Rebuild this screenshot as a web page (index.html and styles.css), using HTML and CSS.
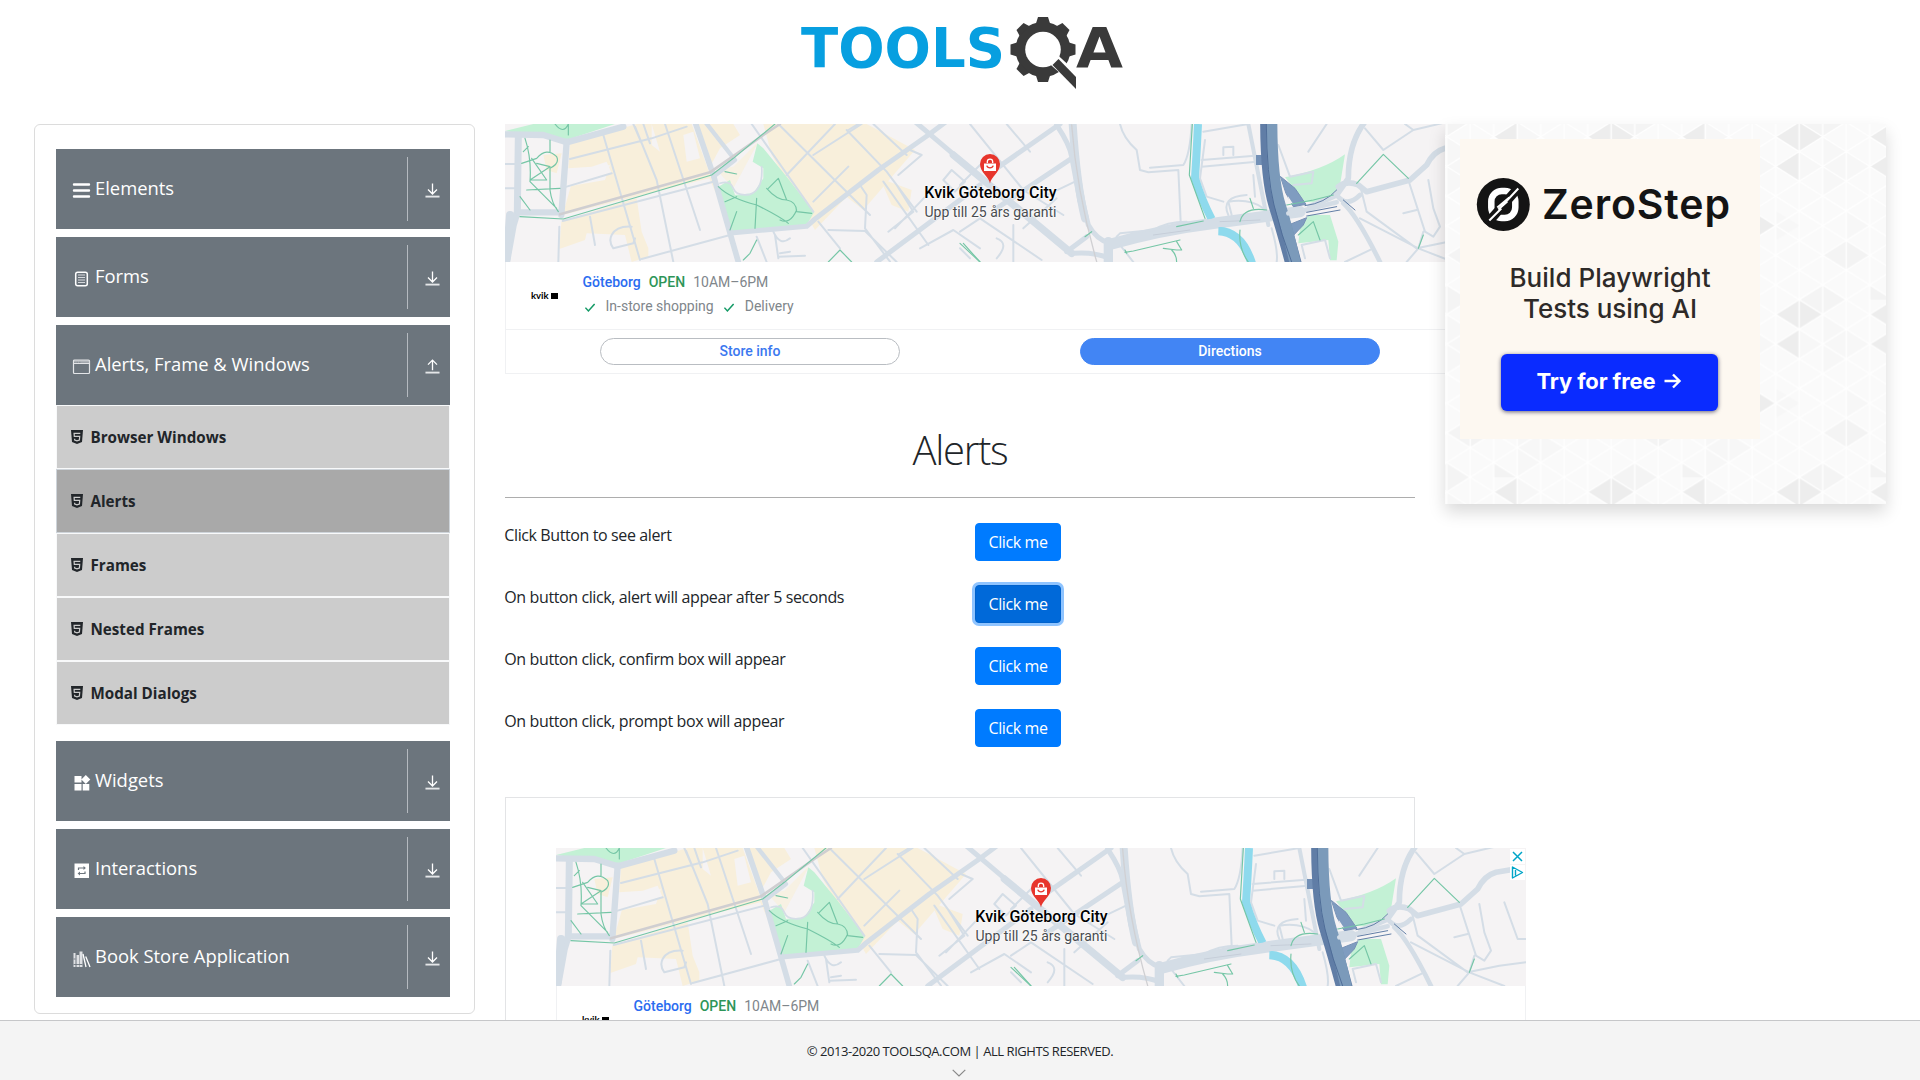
FILE: index.html
```html
<!DOCTYPE html>
<html lang="en">
<head>
<meta charset="utf-8">
<title>ToolsQA - Alerts</title>
<link rel="stylesheet" href="styles.css">
</head>
<body>
<svg class="defs" width="0" height="0" aria-hidden="true">
  <symbol id="i-down" viewBox="0 0 16 17"><path d="M8 1v11M3.2 7.4 8 12.2l4.8-4.8" fill="none" stroke="#fff" stroke-width="1.4"/><path d="M.5 15h15" stroke="#e4e6e8" stroke-width="2"/></symbol>
  <symbol id="i-up" viewBox="0 0 16 17"><path d="M8 12.5V1.6M3.2 6.5 8 1.7l4.8 4.8" fill="none" stroke="#fff" stroke-width="1.4"/><path d="M.5 15h15" stroke="#e4e6e8" stroke-width="2"/></symbol>
  <symbol id="i-html" viewBox="0 0 12 14"><path d="M0 0h12l-1 12-5 2-5-2z" fill="#22262a"/><path d="M9.3 3.3H3.1l.2 3.1h5.4l-.3 3.6-2.4.8-2.3-.8-.1-1.3" fill="none" stroke="#ccc" stroke-width="1.2"/></symbol>
  <symbol id="map" viewBox="0 0 970 138">
    <rect width="970" height="138" fill="#f5f3f4"/>
    <g transform="translate(-5 -9) scale(.33333)" fill="none" stroke-linecap="round" stroke-linejoin="round">
      <g fill="#f8efdb">
        <path d="M210 85 410 27H575L625 165 650 240 628 190 345 260 188 300 215 205 335 175 320 140 275 155 205 160z"/>
        <path d="M590 27H700L720 60 660 100 625 165 590 27zM790 27H1100L1245 105 1090 285 1040 245 945 345 850 180 815 120z"/>
        <path d="M184 320 340 270 410 250 425 350 445 400 445 425 395 441 375 360 260 355 255 375 178 402zM1140 190 1235 225 1225 290 1175 270zM130 120 185 115 170 175 140 165z"/>
        <path d="M650 165 700 155 770 85 785 140 770 90 700 220z" opacity=".7"/>
      </g>
      <g fill="#c3f1d5"><path d="M15 48 100 27H345L200 75z"/><path d="M772 85 790 100 860 185 942 292 920 330 690 350 655 215 690 195 705 240 760 235 790 190 790 160 758 140z"/></g>
      <path d="M455 27 480 110 455 90zM205 170 330 150 315 195 200 215zM580 50 600 130 560 140 550 60z" fill="#f5f3f4" stroke="none"/>
      <g stroke="#d4dde6">
        <path d="M15 58 130 60 200 82 370 35" stroke-width="19"/><path d="M55 65 52 290 40 330 20 441" stroke-width="21"/><path d="M30 300 20 430" stroke-width="24"/>
        <path d="M200 80 184 300M55 292H184" stroke-width="19"/>
        <path d="M585 20 640 180 715 441" stroke-width="17"/><path d="M615 20 705 135 640 185" stroke-width="13"/>
        <path d="M692 354 920 334 945 312 1135 165 1285 60 1345 15M1245 20 1440 185M1130 441 1440 210" stroke-width="15"/>
        <path d="M15 147H45M15 220H45M210 132 455 70 560 35M200 215 335 175M188 318 640 200M310 60 420 435M405 35 470 195 520 441M495 27 600 345M178 335 175 441M425 432 690 360M270 305 285 390M400 27 425 85M430 27 450 85" stroke-width="6"/>
        <path d="M835 27 1110 300M755 27 940 290M860 180 1005 27M940 260 1045 155M940 120 1085 27M955 320 1020 400M985 345 1095 348 1190 441M1150 200 1285 390M1195 180 1265 120 1230 105M1040 45 1160 170 1250 290M1045 45 1075 27M1120 27 1220 120M1080 210 1100 240 1095 340 1170 440M1165 350 1240 290 1190 210M1185 340 1290 230M1260 400 1360 345 1440 400" stroke-width="6"/>
        <path d="M335 360Q350 332 395 335M335 360Q325 380 340 400L400 385 405 370M770 365 800 441M825 360 835 430M820 350Q840 395 870 370M840 415 870 410M835 425 915 422M1330 195 1355 165 1395 200 1365 230z" stroke-width="6"/>
      </g>
      <path d="M660 205Q690 195 700 220Q710 245 750 238Q790 225 785 155" stroke="#d4dde6" stroke-width="5"/>
      <path d="M180 298 630 172 790 60 840 27" stroke="#cfced1" stroke-width="8"/>
      <g stroke="#75c6a6" stroke-width="3.5">
        <path d="M60 305 190 312 635 180 700 130 825 27"/>
        <path d="M75 70Q95 130 90 200L170 280M85 95 70 110M150 75V110M65 145 110 130Q140 95 170 125Q180 145 150 160V225Q155 265 175 290M95 130 140 195 90 195 150 155 110 145M80 225 180 220M60 245 90 285M165 27Q190 60 205 27V60"/>
        <path d="M655 215Q690 250 770 270Q840 305 865 325M770 250 765 340M800 220Q830 255 860 255Q890 260 890 290L935 295M805 220 835 190 860 255M890 285Q870 330 840 315M675 260 710 245M710 290 690 345M770 375 750 415 730 435M985 441 1020 405 1055 441M1390 385 1440 441M675 170 710 177"/>
      </g>
    </g>
    <g transform="translate(455 -9) scale(.33333)" fill="none" stroke-linecap="round" stroke-linejoin="round">
      <g fill="#c3f1d5"><path d="M975 187Q1090 165 1155 118L1140 210Q1100 270 1035 260z"/><path d="M1045 300H1110L1135 380 1130 436H1110L1105 375 1015 385 1020 340z"/></g>
      <g stroke="#d4dde6">
        <path d="M-20 120 335 415" stroke-width="22"/>
        <path d="M110 160 300 27M290 30Q330 90 335 125L360 260M335 130 110 280M340 27Q350 200 385 330Q410 375 450 385M320 410 380 365M340 415Q400 410 450 430" stroke-width="15"/>
        <path d="M338 27Q350 210 375 310" stroke-width="24"/>
        <path d="M445 380V441" stroke-width="28"/><path d="M450 388Q600 345 760 325L1020 290" stroke-width="34"/>
        <path d="M865 27 925 330" stroke-width="12"/>
        <path d="M1215 20Q1165 85 1165 190L1130 240 1050 275M1135 215Q1160 195 1195 210L1220 230 1350 195 1400 150Q1420 110 1455 100L1500 92" stroke-width="17"/>
        <path d="M1150 265Q1190 300 1260 441M1130 240Q1160 280 1200 240" stroke-width="14"/>
        <path d="M480 27Q490 70 530 105L540 165 565 172 655 165 662 320M570 158 670 150Q690 120 695 27M730 50 865 27M725 135 885 122M725 155 890 140M790 120V97L820 95V120M735 75 720 190 740 245 790 260M470 365 480 355 580 345Q620 320 680 320M805 300Q780 245 860 240M815 300 805 260Q870 250 910 280M880 180 885 245M935 340Q955 410 950 441" stroke-width="6"/>
        <path d="M30 27 190 225 310 300M140 27 210 110M0 350 60 310 245 435M160 330V441M110 370Q150 385 110 430M0 210 60 150M30 430 0 400M240 250 345 200M190 340 290 250M480 390 520 441" stroke-width="6"/>
        <path d="M955 90 990 185 1060 170 1055 205 1000 210M1100 27 1045 110M1215 40 1270 105 1360 45 1465 20M1335 27 1360 45M1200 210 1220 290 1370 400 1465 380 1545 370M1200 310 1375 400 1480 441M1345 195 1395 350 1420 365 1440 335 1420 280 1405 195M1390 350 1375 400 1340 441M1330 295 1370 285M1480 190 1520 300 1545 300M1035 430 1025 390 1095 375 1110 430M1155 441 1240 400" stroke-width="6"/>
      </g>
      <path d="M335 30Q350 230 410 440" stroke="#d0d0d3" stroke-width="4"/>
      <path d="M714 27Q710 115 705 190Q725 255 755 312" stroke="#8edaed" stroke-width="24" stroke-linecap="butt"/><path d="M775 348Q845 350 875 445" stroke="#8edaed" stroke-width="26" stroke-linecap="butt"/>
      <path d="M640 340 950 300" stroke="#d4dde6" stroke-width="28"/>
      <path d="M580 360 690 345M780 320 900 315" stroke="#c6ced9" stroke-width="3"/>
      <g stroke="#607da6">
        <path d="M888 135H925" stroke="#7390b6" stroke-width="30" stroke-linecap="butt"/>
        <path d="M962 185 1005 220 1038 268 1000 275 978 235zM985 330 1040 308 1030 330 990 372z" fill="#7f9cc0" stroke="#7590b5" stroke-width="3"/>
        <path d="M983 242 1000 268 987 262z" fill="#f5f3f4" stroke="none"/>
        <path d="M925 15Q925 190 950 270T1003 455" stroke-width="49" stroke-linecap="butt"/>
        <path d="M935 15Q935 190 960 270T1008 455" stroke="#7b9aba" stroke-width="34" stroke-linecap="butt"/>
        <path d="M919 27Q920 180 942 270T995 441" stroke="#4f6d99" stroke-width="3"/>
        <path d="M1035 272Q1095 265 1130 225M1040 303 1140 285M1150 255 1185 285" stroke-width="3"/>
      </g>
      <path d="M985 295 1035 285 1130 262" stroke="#d4dde6" stroke-width="14"/><path d="M1040 292 1130 275" stroke="#607da6" stroke-width="3"/>
      <g stroke="#75c6a6" stroke-width="3.5"><path d="M697 27 688 180 735 310M650 335 730 318M840 320Q850 275 920 285M870 250 880 280M840 345Q835 400 865 441M495 412 520 408 660 375M495 405 500 415M610 400 650 405 665 405M650 380 665 405M635 405Q650 420 650 441M0 385 60 441M375 365 395 350M1190 205 1270 118 1345 190M980 270 1060 255 1120 240M1015 360 1060 320 1080 375M1375 400 1390 360"/></g>
    </g>
  </symbol>
  <symbol id="pin" viewBox="0 0 20 30"><path d="M10 29.5C9.3 23 0 18.500 0 10a10 10 0 0 1 20 0c0 8.500-9.300 13-10 19.500z" fill="#e7352c"/><path d="M4 9.500h12V17H4z" fill="#fff"/><path d="M7.300 9V7.800a2.700 2.700 0 0 1 5.400 0V9" stroke="#fff" stroke-width="1.300" fill="none"/><path d="M6.800 11.700a3.300 3 0 0 0 6.400 0" stroke="#e7352c" stroke-width="1.300" fill="none"/></symbol>
  <symbol id="check" viewBox="0 0 10 9"><path d="M.4 4.700 3.400 7.900 9.600 1" fill="none" stroke="#149a66" stroke-width="1.500"/></symbol>
</svg>

<header class="header">
  <svg class="logo" viewBox="0 0 324 76" width="324" height="76">
    <text class="logo-blue" x="1" y="51" textLength="204" lengthAdjust="spacingAndGlyphs">TOOLS</text>
    <g transform="translate(243 33.500)">
      <g fill="#3a3a3a"><circle r="27.500"/>
        <path id="tooth" d="M-7-26-5-32.500H5L7-26z"/>
        <use href="#tooth" transform="rotate(45)"/><use href="#tooth" transform="rotate(90)"/><use href="#tooth" transform="rotate(180)"/><use href="#tooth" transform="rotate(225)"/><use href="#tooth" transform="rotate(270)"/><use href="#tooth" transform="rotate(315)"/>
      </g>
      <circle r="17.800" fill="#fff"/>
      <path d="M5 13 13 4 38 27V42z" fill="#fff"/>
      <path d="M9.500 15.500 15.500 9.500 33 27.500V39.500z" fill="#3a3a3a"/>
    </g>
    <text class="logo-dark" x="276" y="51" textLength="47" lengthAdjust="spacingAndGlyphs">A</text>
  </svg>
</header>

<main class="main">
  <nav class="sidebar">
    <section class="group">
      <div class="group-head"><svg class="g-icon" viewBox="0 0 18 18"><path d="M1.500 2.500h15M1.500 8.500h15M1.500 14.500h15" stroke="#fff" stroke-width="2.400" stroke-linecap="round"/></svg><span class="g-title">Elements</span><span class="toggle"><svg><use href="#i-down"/></svg></span></div>
    </section>
    <section class="group">
      <div class="group-head"><svg class="g-icon" viewBox="0 0 18 18"><rect x="3.200" y="2.200" width="11.600" height="13.600" rx="2" fill="none" stroke="#fff" stroke-width="1.500"/><path d="M5.500 5h7M5.500 7.500h7M5.500 10h7M5.500 12.500h7" stroke="#d5d8dc" stroke-width="1.100"/></svg><span class="g-title">Forms</span><span class="toggle"><svg><use href="#i-down"/></svg></span></div>
    </section>
    <section class="group open">
      <div class="group-head"><svg class="g-icon" viewBox="0 0 18 18"><rect x="1" y="2" width="16" height="13.500" rx="1" fill="none" stroke="#e3e5e8" stroke-width="1.200"/><path d="M1 3h16M1 5.300h16" stroke="#e3e5e8" stroke-width="1.200"/><path d="M3 4h1M5.500 4h1M8 4h9" stroke="#b8bcc2" stroke-width="1"/></svg><span class="g-title">Alerts, Frame &amp; Windows</span><span class="toggle"><svg><use href="#i-up"/></svg></span></div>
      <ul class="items">
        <li class="item"><svg><use href="#i-html"/></svg><span>Browser Windows</span></li>
        <li class="item active"><svg><use href="#i-html"/></svg><span>Alerts</span></li>
        <li class="item"><svg><use href="#i-html"/></svg><span>Frames</span></li>
        <li class="item"><svg><use href="#i-html"/></svg><span>Nested Frames</span></li>
        <li class="item"><svg><use href="#i-html"/></svg><span>Modal Dialogs</span></li>
      </ul>
    </section>
    <section class="group">
      <div class="group-head"><svg class="g-icon" viewBox="0 0 18 18"><path d="M2 2h7v6.500H2zM2 10h7v6.500H2zM10.200 10h6.600v6.500h-6.600zM13.300 1l4.500 4.500-4.500 4.500-4.400-4.500z" fill="#fff"/></svg><span class="g-title">Widgets</span><span class="toggle"><svg><use href="#i-down"/></svg></span></div>
    </section>
    <section class="group">
      <div class="group-head"><svg class="g-icon" viewBox="0 0 18 18"><path d="M2 1.500h14.500V16H2z" fill="#fff"/><path d="M6 8V6h6M12.500 9.500v2H6.500" fill="none" stroke="#6c757d" stroke-width="1.200"/><path d="M11 4 13.400 6 11 8zM7.500 9.500 5.100 11.500 7.500 13.500z" fill="#6c757d"/></svg><span class="g-title">Interactions</span><span class="toggle"><svg><use href="#i-down"/></svg></span></div>
    </section>
    <section class="group">
      <div class="group-head"><svg class="g-icon" viewBox="0 0 18 18"><path d="M1 3h2v14H1zM4 5h2.500v12H4zM7 1.500h3V17H7z" fill="#dfe1e4"/><path d="M10.500 4 13.500 17M13.200 6.500 17.500 17" stroke="#fff" stroke-width="1.300"/><path d="M1 14.500h9M1 9h2" stroke="#6c757d" stroke-width=".9"/></svg><span class="g-title">Book Store Application</span><span class="toggle"><svg><use href="#i-down"/></svg></span></div>
    </section>
  </nav>

  <div class="content">
    <article class="ad">
      <div class="ad-map"><svg class="map" viewBox="0 0 970 138"><use href="#map"/></svg>
        <div class="place"><svg class="pin"><use href="#pin"/></svg><b>Kvik Göteborg City</b><span>Upp till 25 års garanti</span></div>
      </div>
      <div class="ad-info">
        <div class="kvik">kvik<i></i></div>
        <div class="lines"><p><b class="blue">Göteborg</b><b class="green">OPEN</b><span>10AM–6PM</span></p>
        <p><svg><use href="#check"/></svg><span class="svc">In-store shopping</span><svg><use href="#check"/></svg><span class="svc">Delivery</span></p></div>
      </div>
      <div class="ad-actions"><span class="pill">Store info</span><span class="pill solid">Directions</span></div>
    </article>

    <h1 class="title">Alerts</h1>
    <div class="row"><span class="label">Click Button to see alert</span><button class="btn">Click me</button></div>
    <div class="row"><span class="label">On button click, alert will appear after 5 seconds</span><button class="btn focus">Click me</button></div>
    <div class="row"><span class="label">On button click, confirm box will appear</span><button class="btn">Click me</button></div>
    <div class="row"><span class="label">On button click, prompt box will appear</span><button class="btn">Click me</button></div>

    <div class="frame">
      <article class="ad">
        <div class="ad-map"><svg class="map" viewBox="0 0 970 138"><use href="#map"/></svg>
          <div class="place"><svg class="pin"><use href="#pin"/></svg><b>Kvik Göteborg City</b><span>Upp till 25 års garanti</span></div>
          <div class="ad-controls"><svg viewBox="0 0 15 15"><path d="M3 3l9 9M12 3l-9 9" stroke="#00a5c8" stroke-width="1.500"/></svg><svg viewBox="0 0 15 15"><path d="M2.500 2 12.500 7.500 2.500 13zM5.500 5v5.500" fill="none" stroke="#00a5c8" stroke-width="1.400" stroke-linejoin="round"/></svg></div>
        </div>
        <div class="ad-info">
          <div class="kvik">kvik<i></i></div>
          <div class="lines"><p><b class="blue">Göteborg</b><b class="green">OPEN</b><span>10AM–6PM</span></p></div>
        </div>
      </article>
    </div>
  </div>

  <aside class="promo">
    <svg class="promo-art" viewBox="0 0 441 380" width="441" height="380">
      <defs>
        <g id="lattice"><path d="M0 0 564 355.300M0 88.800 564 444.200M0 177.700 564 533M0 266.500 423 533M0 355.300 282 533M0 444.200 141 533M141 0 564 266.500M282 0 564 177.700M423 0 564 88.800M564 0 0 355.300M564 88.800 0 444.200M564 177.700 0 533M564 266.500 141 533M564 355.300 282 533M564 444.200 423 533M423 0 0 266.500M282 0 0 177.700M141 0 0 88.800"/></g>
        <pattern id="tri" width="564" height="533" patternUnits="userSpaceOnUse" patternTransform="translate(1.667 -2) scale(.33333)">
          <rect width="564" height="533" fill="#fafafa"/>
          <g fill="#f7f7f7"><path d="M0 44 141 133 0 222zM212 0 282 44 212 89zM282 133 353 178 282 222zM70 267 141 311 70 355zM423 267 494 311 423 355zM212 355 353 444 212 533zM494 89 564 133 494 178z"/>
          <path d="M353 89 423 133 353 178 282 133z"/></g>
          <g fill="#f4f4f4"><path d="M70 355 141 400 70 444 0 400zM0 488 70 533H0zM564 488 494 533H564zM0 44 70 0H0zM564 44 494 0H564z"/></g>
          <g fill="#f3f3f3"><path d="M564 400 634 444 564 488zM141 400 70 355V444zM141 488 212 533H141z"/></g>
          <g fill="#ededed"><path d="M494 0 564 44 494 89 423 44zM141 44 212 0V89zM423 133 494 89V178zM141 133 212 89V178zM353 267 423 311 353 355z"/></g>
          <g stroke="#fff" stroke-width="4" fill="none"><path d="M0 0V533M70.500 0V533M141 0V533M211.500 0V533M282 0V533M352.500 0V533M423 0V533M493.500 0V533M564 0V533"/>
          <use href="#lattice" y="44.400"/><use href="#lattice" y="-488.800"/></g>
        </pattern>
      </defs>
      <rect width="441" height="380" fill="url(#tri)"/>
      <rect x="15" y="15" width="300" height="300" fill="#fdf8f1"/>
      <g transform="translate(58.300 80.500)"><circle r="26.500" fill="#141414"/><rect x="-12" y="-13.500" width="24" height="27" rx="10.500" fill="none" stroke="#fff" stroke-width="6.500"/>
        <path d="M-17 20 17-19" stroke="#141414" stroke-width="9"/><path d="M-14 16-2 4M-6 3 6-7M0 0 15-16M-5 5 4-3" stroke="#fff" stroke-width="2"/></g>
      <text class="p-brand" x="97" y="94.500" textLength="188">ZeroStep</text>
      <text class="p-copy" x="64.500" y="163" textLength="201">Build Playwright</text>
      <text class="p-copy" x="78" y="194" textLength="174">Tests using AI</text>
      <rect class="p-btn" x="56" y="230" width="217" height="57" rx="6" fill="#0a2bff"/>
      <text class="p-cta" x="91.500" y="265" textLength="119">Try for free</text>
      <path d="M219.500 257h14M228 250.500l6.500 6.500-6.500 6.500" fill="none" stroke="#fff" stroke-width="2.400"/>
    </svg>
  </aside>
</main>

<footer class="footer">
  <span>© 2013-2020 TOOLSQA.COM | ALL RIGHTS RESERVED.</span>
  <svg class="chev" viewBox="0 0 14 8"><path d="M.7.900 7 6.900 13.300.900" fill="none" stroke="#888" stroke-width="1.200"/></svg>
</footer>
</body>
</html>
```

FILE: styles.css
```css
* { box-sizing: border-box; }
body {
  margin: 0;
  height: 1080px;
  overflow: hidden;
  display: flex;
  flex-direction: column;
  font-family: "Open Sans", "Noto Sans", sans-serif;
  font-size: 16px;
  line-height: 24px;
  color: #212529;
  background: #fff;
}
svg { display: block; flex: none; }
.defs { position: absolute; }

.header { height: 124px; flex: none; display: flex; justify-content: center; padding: 16px 0 0 4px; }
.logo { overflow: visible; }
.logo text { font: bold 55px "DejaVu Sans", sans-serif; }
.logo-blue { fill: #079fe0; }
.logo-dark { fill: #3a3a3a; }

.main { flex: 1; min-height: 0; overflow: hidden; display: flex; align-items: flex-start; gap: 30px; padding: 20px 34px 0; margin-top: -20px; }

.sidebar { width: 441px; height: 890px; flex: none; border: 1px solid #dcdcdc; border-radius: 6px; padding: 24px 24px 0 21px; display: flex; flex-direction: column; gap: 8px; }
.group-head { height: 80px; background: #6c757d; color: #fff; display: flex; align-items: center; padding: 8px 10px 8px 16px; font-size: 18.400px; }
.g-icon { width: 19px; height: 18px; margin-top: 4px; }
.g-title { margin: -2px 0 0 4px; flex: 1; white-space: nowrap; }
.toggle { height: 64px; border-left: 1px solid #b5bac0; padding: 25px 0 0 17px; }
.toggle svg { width: 15px; height: 17px; }
.open { margin-bottom: 8px; }
.items { list-style: none; margin: 0; padding: 0; }
.item { height: 64px; background: #ccc; border: 1px solid #f8f9fa; display: flex; align-items: center; padding-left: 14px; font-size: 15.200px; font-weight: 700; }
.item svg { width: 12px; height: 14px; margin-right: 7.500px; }
.item.active { background: #a9a9a9; border-color: #ced4da; }

.content { width: 910px; flex: none; }

.ad { width: 970px; height: 250px; font-family: Roboto, sans-serif; font-size: 14px; color: #80868b; background: #fff; border: solid #f0f1f3; border-width: 0 1px 1px; }
.ad-map { display: grid; width: 970px; height: 138px; margin-left: -1px; }
.ad-map > * { grid-area: 1 / 1; }
.map { width: 970px; height: 138px; }
.place { justify-self: center; display: flex; flex-direction: column; align-items: center; padding: 30px 0 0 1px; color: #494c50; text-shadow: 0 0 2px #fff, 0 0 2px #fff, 0 0 2px #fff; }
.place b { font-size: 16px; font-weight: 500; color: #000; line-height: 20px; margin-top: -1px; }
.place span { line-height: 18px; }
.pin { width: 20px; height: 30px; }
.ad-controls { justify-self: end; margin: 1px 1px 0 0; display: flex; flex-direction: column; gap: 1px; }
.ad-controls svg { width: 15px; height: 15px; background: #fff; }
.ad-info { height: 68px; border-bottom: 1px solid #f0f1f3; display: flex; padding: 8px 0 0 25px; }
.kvik { width: 51.500px; display: flex; align-items: center; height: 52px; font: 700 9.500px/10px Lato, sans-serif; color: #000; gap: 2px; }
.kvik i { width: 7px; height: 6px; background: #000; }
.lines p { margin: 0; height: 24px; line-height: 24px; display: flex; align-items: center; }
.lines b { font-weight: 500; margin-right: 8px; }
.lines svg { width: 10px; height: 9px; margin: 2px 11px 0 2px; }
.svc { margin-right: 8px; }
.blue { color: #2a6cf0; }
.green { color: #2d9558; }
.ad-actions { display: flex; gap: 180px; padding: 8px 0 0 94px; }
.pill { width: 300px; height: 27px; border: 1px solid #b9bdc2; border-radius: 14px; text-align: center; font-weight: 500; line-height: 25px; color: #3b78f0; }
.pill.solid { background: #4285f4; border-color: #4285f4; color: #fff; }

.title { margin: 48px 0 24px; height: 76px; border-bottom: 1px solid #adadad; text-align: center; font-size: 40px; font-weight: 300; line-height: 56px; letter-spacing: -1.300px; }
.row { height: 38px; margin-bottom: 24px; display: flex; }
.title + .row { margin-top: 25px; }
.label { width: 470px; letter-spacing: -.39px; white-space: nowrap; text-indent: -.7px; }
.btn { width: 86px; height: 38px; padding: 0; border: 1px solid #007bff; border-radius: 4px; background: #007bff; color: #fff; font: inherit; letter-spacing: -.4px; }
.btn.focus { background: #0069d9; border-color: #0062cc; box-shadow: 0 0 0 3px #8fc4ff; }

.frame { margin-top: 50px; height: 352px; border: 1px solid #e3e4e6; padding: 50px; }

.promo { width: 441px; height: 380px; flex: none; position: relative; box-shadow: 0 8px 16px rgba(0,0,0,.15); }
.promo text { font-family: Inter, sans-serif; }
.p-brand { font-size: 41px; font-weight: 600; fill: #141414; }
.p-copy { font-size: 26px; font-weight: 500; fill: #2e2a28; }
.p-cta { font-size: 22px; font-weight: 700; fill: #fff; }
.p-btn { filter: drop-shadow(0 1px 2px rgba(0,0,40,.6)); }

.footer { height: 60px; flex: none; background: #f4f4f4; border-top: 1px solid #c6c7c9; display: flex; flex-direction: column; align-items: center; font-size: 13px; line-height: 20px; padding-top: 20px; letter-spacing: -.45px; position: relative; }
.chev { width: 14px; height: 8px; margin: 8px 3px 0 0; }
```
